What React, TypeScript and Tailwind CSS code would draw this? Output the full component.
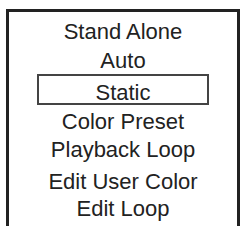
export default function App() {
  return (
    <div className="w-[242px] h-[226px] overflow-hidden bg-white pt-[9px] pl-[6px]">
      <div
        className="w-[234px] h-[240px] border-[3px] border-[#222] flex flex-col items-center pt-[5px] text-[#222] text-[22px] leading-[29px]"
        style={{ fontFamily: '"Liberation Sans", Arial, sans-serif' }}
      >
        <div className="h-[29px]">Stand Alone</div>
        <div className="h-[29px]">Auto</div>
        <div className="w-[172px] h-[31px] -mt-[1px] pt-[2px] border-2 border-[#444] text-center">Static</div>
        <div className="h-[28px] mt-[2px]">Color Preset</div>
        <div className="h-[32px]">Playback Loop</div>
        <div className="h-[27px]">Edit User Color</div>
        <div className="h-[29px]">Edit Loop</div>
      </div>
    </div>
  );
}
